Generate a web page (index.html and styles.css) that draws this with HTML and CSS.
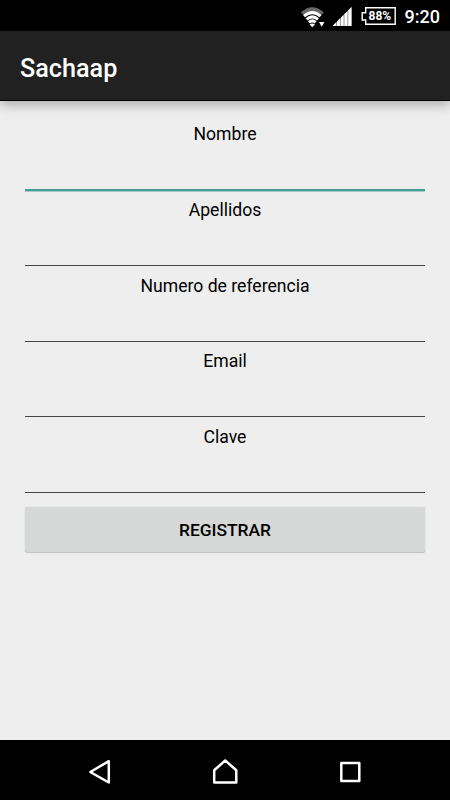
FILE: index.html
```
<!DOCTYPE html>
<html lang="es">
<head>
    <meta charset="UTF-8">
    <meta name="viewport" content="width=device-width, initial-scale=1.0">
    <title>Sachaap</title>
    <link rel="stylesheet" href="styles.css">
</head>
<body>
    <div class="status-bar">
        <svg class="wifi" width="25" height="21" viewBox="0 0 25 21">
            <path d="M0.8 5.3Q12.3 -5 23.8 5.3L21.6 7.8Q12.3 0.5 3 7.8Z" fill="#686868"/>
            <path d="M4 9.2Q12.3 2 20.6 9.2M6.6 12.4Q12.3 7.4 18 12.4M9 15.4Q12.3 12.4 15.6 15.4" fill="none" stroke="#fff" stroke-width="3"/>
            <path d="M9.6 17.4Q12.3 15.4 15 17.4L12.3 20.2Z" fill="#fff"/>
            <path d="M17.6 14H25V20H17.6Z" fill="#000"/>
            <path d="M19 15H24.4L21.7 19.8Z" fill="#fff"/>
        </svg>
        <svg class="signal" width="20" height="19" viewBox="0 0 20 19">
            <path d="M0.5 19L19.5 0V19Z" fill="#999"/>
            <path d="M1 19V18.5L4 15.5V19ZM5 19V14.5L8 11.5V19ZM9 19V10.5L11.5 8V19ZM12.5 19V7L15.3 4.2V19ZM16.3 19V3.2L19.5 0V19Z" fill="#fff"/>
        </svg>
        <div class="battery">
            <svg width="35" height="19" viewBox="0 0 35 19">
                <path d="M4.7 0.8H34.2V17.2H4.7V13H1.2V5.7H4.7Z" fill="none" stroke="#fff" stroke-width="1.4"/>
            </svg>
            <span class="battery-level">88%</span>
        </div>
        <span class="clock">9:20</span>
    </div>

    <div class="app-bar">
        <h1>Sachaap</h1>
    </div>

    <form class="form">
        <div class="field">
            <label for="nombre">Nombre</label>
            <input type="text" id="nombre" class="active">
        </div>
        <div class="field">
            <label for="apellidos">Apellidos</label>
            <input type="text" id="apellidos">
        </div>
        <div class="field">
            <label for="referencia">Numero de referencia</label>
            <input type="text" id="referencia">
        </div>
        <div class="field">
            <label for="email">Email</label>
            <input type="email" id="email">
        </div>
        <div class="field">
            <label for="clave">Clave</label>
            <input type="password" id="clave">
        </div>
        <button type="button" class="btn">REGISTRAR</button>
    </form>

    <div class="nav-bar">
        <svg width="26" height="28" viewBox="0 0 26 28">
            <path d="M3.3 14L21.8 3.2V24.5Z"/>
        </svg>
        <svg width="26" height="28" viewBox="0 0 26 28">
            <path d="M13.2 2.5L24.3 12.3V24.5H2.2V12.3Z"/>
        </svg>
        <svg width="26" height="28" viewBox="0 0 26 28">
            <path d="M4.3 5H22.3V23H4.3Z"/>
        </svg>
    </div>
</body>
</html>
```

FILE: styles.css
```
* {
    box-sizing: border-box;
}

body {
    margin: 0;
    height: 100vh;
    display: flex;
    flex-direction: column;
    background: #eee;
    font-family: Roboto, sans-serif;
    color: #000;
    overflow: hidden;
}

.status-bar {
    height: 31px;
    flex: none;
    display: flex;
    align-items: flex-start;
    justify-content: flex-end;
    padding: 7px 10px 0 0;
    background: #000;
    color: #fff;
}

.signal {
    margin: 0 9px 0 7px;
}

.battery {
    position: relative;
    width: 35px;
    height: 19px;
}

.battery svg {
    display: block;
}

.battery-level {
    position: absolute;
    left: 8px;
    top: 2px;
    font-size: 12px;
    line-height: 14px;
    font-weight: 700;
}

.clock {
    margin-left: 9px;
    font-size: 18px;
    line-height: 19px;
    font-weight: 500;
}

.app-bar {
    height: 70px;
    flex: none;
    display: flex;
    align-items: center;
    padding: 5px 20px 0;
    background: #212121;
    border-bottom: 1px solid #000;
    box-shadow: 0 4px 11px rgba(0, 0, 0, 0.28);
}

.app-bar h1 {
    margin: 0;
    font-size: 25.2px;
    font-weight: 500;
    color: #fff;
}

.form {
    flex: 1;
    padding: 14px 25px 0;
}

.field {
    height: 75.6px;
    padding-top: 8.4px;
    display: flex;
    flex-direction: column;
    text-align: center;
}

.field label {
    font-size: 17.6px;
    line-height: 22px;
}

.field input {
    flex: 1;
    width: 100%;
    min-height: 0;
    padding: 0;
    border: none;
    border-bottom: 1px solid #444;
    border-radius: 0;
    background: none;
    outline: none;
    font: inherit;
}

.field input.active {
    border-bottom: 2px solid #459e97;
    box-shadow: 0 1px 0 #a3cbc8;
}

.btn {
    display: block;
    width: 100%;
    height: 45px;
    margin-top: 14px;
    padding: 2px 0 0;
    border: none;
    border-radius: 2px;
    background: #d6d8d7;
    box-shadow: 0 0 1px rgba(0, 0, 0, 0.2), 0 1px 1px rgba(0, 0, 0, 0.18);
    font-family: inherit;
    font-size: 17.4px;
    font-weight: 500;
    color: #000;
}

.nav-bar {
    height: 60px;
    flex: none;
    display: flex;
    justify-content: center;
    align-items: center;
    gap: 99px;
    padding-top: 4px;
    background: #000;
}

.nav-bar path {
    fill: none;
    stroke: #fff;
    stroke-width: 2.5;
    stroke-linejoin: round;
}
```
